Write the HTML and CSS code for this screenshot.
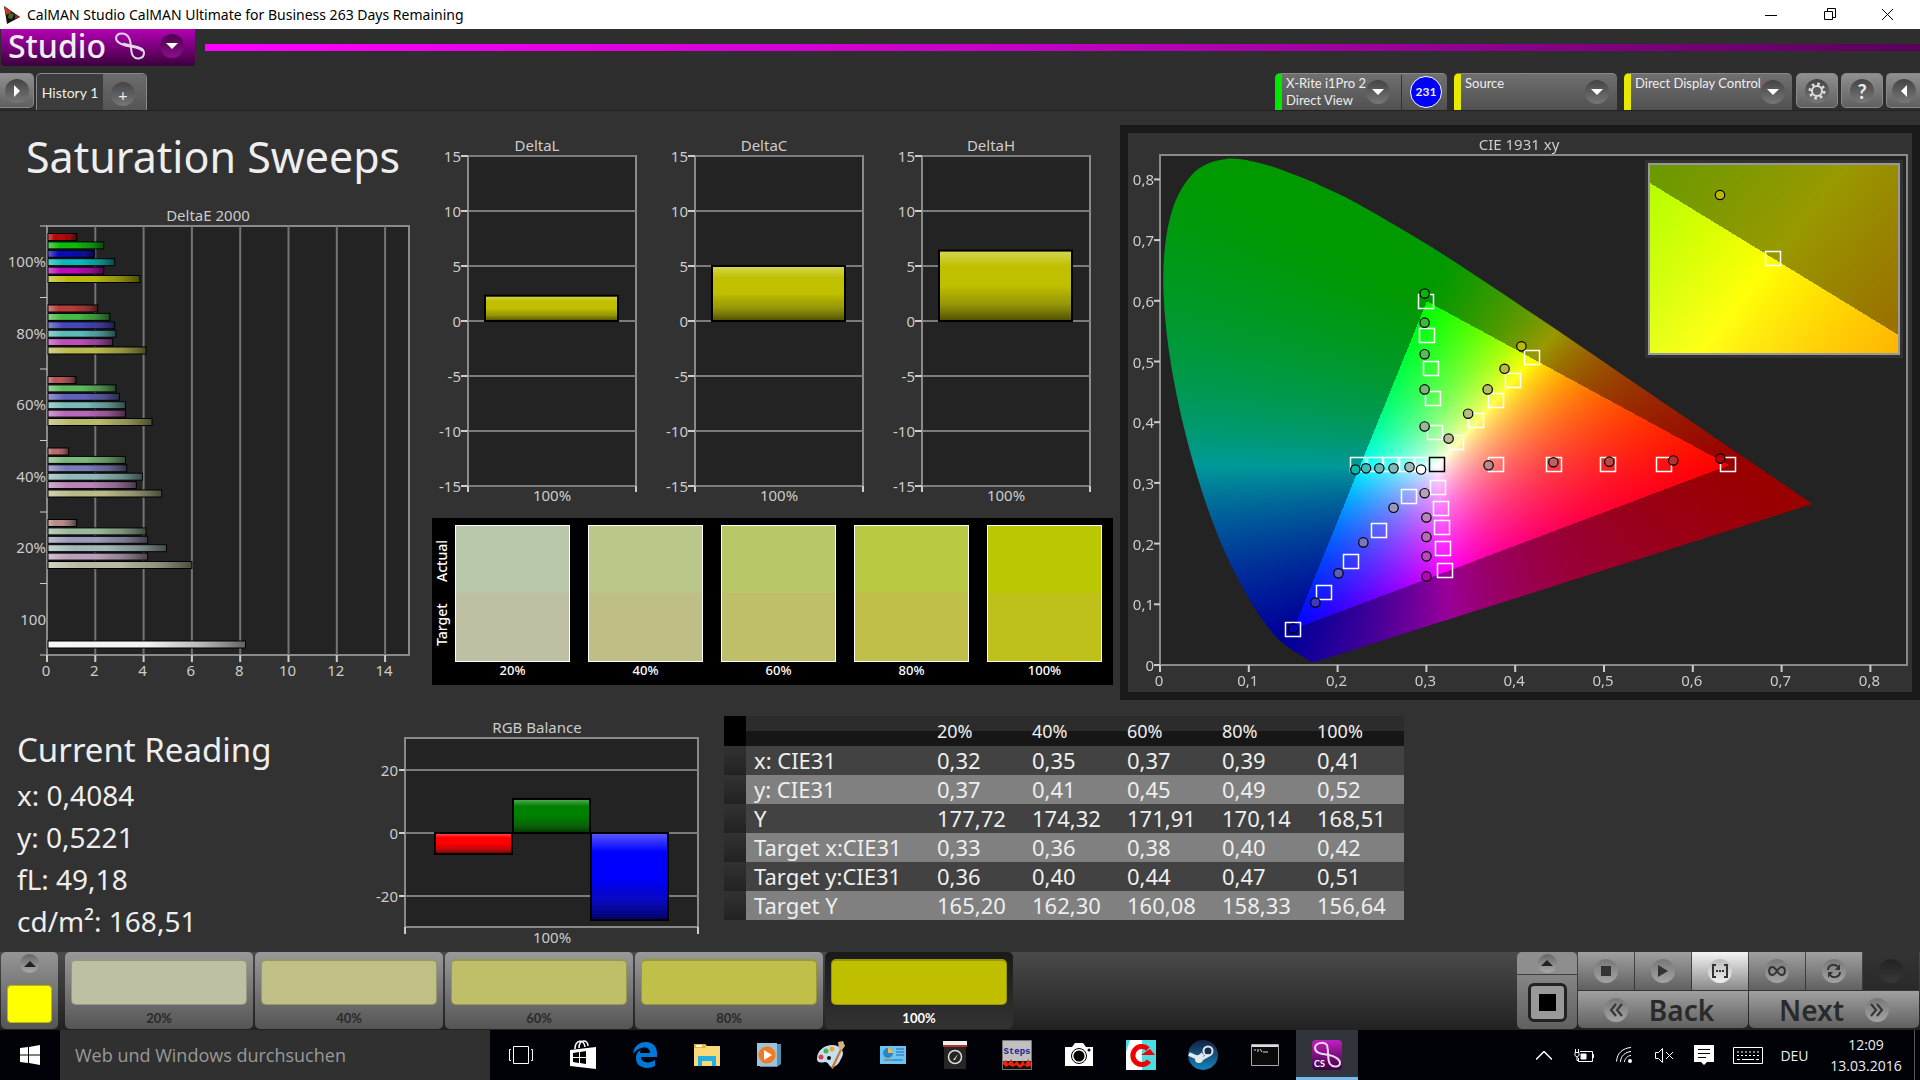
FILE: index.html
```html
<!DOCTYPE html>
<html lang="en">
<head>
    <meta charset="UTF-8">
    <meta name="viewport" content="width=device-width, initial-scale=1.0">
    <title>CalMAN Studio</title>
    <link rel="stylesheet" href="styles.css">
</head>
<body>
    <header class="titlebar">
        <svg class="app-icon" width="18" height="20" viewBox="0 0 18 20"><path d="M1 1 17 12 4 19z" fill="#1c1010"/><path d="M1 1 9 7 3 10z" fill="#c33a1c"/><path d="M6 8l5 1-2 5-4-1z" fill="#3f6b2a"/><path d="M12 9l5 3-5 2z" fill="#a02418"/></svg>
        <span class="titlebar-text">CalMAN Studio CalMAN Ultimate for Business 263 Days Remaining</span>
        <button class="win-btn" aria-label="Minimize"><svg width="12" height="12" viewBox="0 0 12 12"><path d="M0 6.500H12" stroke="#000"/></svg></button>
        <button class="win-btn" aria-label="Restore"><svg width="13" height="13" viewBox="0 0 13 13" fill="none" stroke="#000"><path d="M1.500 3.500h8v8h-8zM4.500 3V.5h8v9H10"/></svg></button>
        <button class="win-btn" aria-label="Close"><svg width="13" height="13" viewBox="0 0 13 13"><path d="M1 1l11 11M12 1L1 12" stroke="#000"/></svg></button>
    </header>

    <div class="brandbar">
        <button class="brand">
            <span>Studio</span>
            <svg width="34" height="30" viewBox="0 0 34 30" fill="none" stroke="#e4d4e8" stroke-width="2"><path d="M16 7C13 1 4 1 3 7c0 5 7 7 13 8s15 1 15 7c0 6-8 7-11 3-3-4-1-13-4-18z"/><path d="M10 13c7 3 17 2 20 7" stroke-width="3"/></svg>
            <span class="round brand-drop"><svg width="14" height="8" viewBox="0 0 14 8"><path d="M1 1h12L7 7z" fill="#fff"/></svg></span>
        </button>
        <div class="brand-line"></div>
    </div>

    <nav class="tabrow">
        <button class="side-btn side-left" aria-label="Expand"><span class="round"><svg width="8" height="14" viewBox="0 0 8 14"><path d="M1 1v12l6-6z" fill="#fff"/></svg></span></button>
        <div class="tabs">
            <button class="tab">History 1</button>
            <button class="tab-add" aria-label="Add tab"><span class="round">+</span></button>
        </div>
        <div class="device device-meter">
            <span class="device-name">X-Rite i1Pro 2<br>Direct View</span>
            <button class="round" aria-label="Meter options"><svg width="12" height="8" viewBox="0 0 12 8"><path d="M0 1h12L6 7z" fill="#fff"/></svg></button>
            <span class="badge-cell"><span class="badge">231</span></span>
        </div>
        <div class="device device-source">
            <span class="device-name">Source</span>
            <button class="round" aria-label="Source options"><svg width="12" height="8" viewBox="0 0 12 8"><path d="M0 1h12L6 7z" fill="#fff"/></svg></button>
        </div>
        <div class="device device-display">
            <span class="device-name">Direct Display Control</span>
            <button class="round" aria-label="Display options"><svg width="12" height="8" viewBox="0 0 12 8"><path d="M0 1h12L6 7z" fill="#fff"/></svg></button>
        </div>
        <button class="side-btn" aria-label="Settings"><span class="round"><svg width="18" height="18" viewBox="0 0 18 18" fill="none" stroke="#ddd"><circle cx="9" cy="9" r="5" stroke-width="2"/><circle cx="9" cy="9" r="7" stroke-width="3" stroke-dasharray="2.500 3"/></svg></span></button>
        <button class="side-btn" aria-label="Help"><span class="round help">?</span></button>
        <button class="side-btn side-right" aria-label="Collapse"><span class="round"><svg width="8" height="14" viewBox="0 0 8 14"><path d="M7 1v12L1 7z" fill="#fff"/></svg></span></button>
    </nav>

    <main>
        <section class="charts">
            <div class="col-sweeps">
                <h1>Saturation Sweeps</h1>
                <svg id="deltaE" class="chart" viewBox="0 0 432 490"></svg>
            </div>
            <div class="col-deltas">
                <div class="deltas">
                    <svg id="deltaL" class="chart" viewBox="0 0 227 380"></svg>
                    <svg id="deltaC" class="chart" viewBox="0 0 227 380"></svg>
                    <svg id="deltaH" class="chart" viewBox="0 0 227 380"></svg>
                </div>
                <div class="swatches">
                    <div class="swatch-side"><span>Actual</span><span>Target</span></div>
                    <div class="swatch-grid">
                        <div class="swatch"><div class="pair pair-20"></div>20%</div>
                        <div class="swatch"><div class="pair pair-40"></div>40%</div>
                        <div class="swatch"><div class="pair pair-60"></div>60%</div>
                        <div class="swatch"><div class="pair pair-80"></div>80%</div>
                        <div class="swatch"><div class="pair pair-100"></div>100%</div>
                    </div>
                </div>
            </div>
            <div class="cie">
                <canvas id="cieFill" width="784" height="559"></canvas>
                <svg id="cie" class="chart" viewBox="0 0 784 559"></svg>
            </div>
        </section>

        <section class="readings">
            <div class="reading">
                <h2>Current Reading</h2>
                <p>x: 0,4084</p>
                <p>y: 0,5221</p>
                <p>fL: 49,18</p>
                <p>cd/m²: 168,51</p>
            </div>
            <svg id="rgb" class="chart" viewBox="0 0 350 240"></svg>
            <div class="table-wrap">
                <table>
                    <thead>
                        <tr><td class="mark"></td><th class="name"></th><th>20%</th><th>40%</th><th>60%</th><th>80%</th><th>100%</th></tr>
                    </thead>
                    <tbody>
                        <tr><td class="mark"></td><th class="name">x: CIE31</th><td>0,32</td><td>0,35</td><td>0,37</td><td>0,39</td><td>0,41</td></tr>
                        <tr><td class="mark"></td><th class="name">y: CIE31</th><td>0,37</td><td>0,41</td><td>0,45</td><td>0,49</td><td>0,52</td></tr>
                        <tr><td class="mark"></td><th class="name">Y</th><td>177,72</td><td>174,32</td><td>171,91</td><td>170,14</td><td>168,51</td></tr>
                        <tr><td class="mark"></td><th class="name">Target x:CIE31</th><td>0,33</td><td>0,36</td><td>0,38</td><td>0,40</td><td>0,42</td></tr>
                        <tr><td class="mark"></td><th class="name">Target y:CIE31</th><td>0,36</td><td>0,40</td><td>0,44</td><td>0,47</td><td>0,51</td></tr>
                        <tr><td class="mark"></td><th class="name">Target Y</th><td>165,20</td><td>162,30</td><td>160,08</td><td>158,33</td><td>156,64</td></tr>
                    </tbody>
                </table>
            </div>
        </section>
    </main>

    <footer class="toolbar">
        <button class="current" aria-label="Current pattern">
            <span class="round small"><svg width="12" height="8" viewBox="0 0 12 8"><path d="M0 7h12L6 1z" fill="#222"/></svg></span>
            <span class="current-color"></span>
        </button>
        <button class="level"><span class="chip chip-20"></span>20%</button>
        <button class="level"><span class="chip chip-40"></span>40%</button>
        <button class="level"><span class="chip chip-60"></span>60%</button>
        <button class="level"><span class="chip chip-80"></span>80%</button>
        <button class="level selected"><span class="chip chip-100"></span>100%</button>

        <div class="pattern">
            <button class="pattern-up" aria-label="Pattern menu"><span class="round small"><svg width="12" height="8" viewBox="0 0 12 8"><path d="M0 7h12L6 1z" fill="#222"/></svg></span></button>
            <button class="pattern-window" aria-label="Window pattern"><span class="pattern-frame"><span class="pattern-dot"></span></span></button>
        </div>
        <div class="transport">
            <button class="key" aria-label="Stop"><span class="round"><svg width="12" height="12"><path d="M1 1h10v10H1z" fill="#333"/></svg></span></button>
            <button class="key" aria-label="Play"><span class="round"><svg width="12" height="14"><path d="M1 1v12l10-6z" fill="#333"/></svg></span></button>
            <button class="key active" aria-label="Read series"><span class="round"><svg width="18" height="16" viewBox="0 0 18 16" fill="none" stroke="#333" stroke-width="2"><path d="M5 2H2v12h3M13 2h3v12h-3M5 8h2M8 8h2M11 8h2"/></svg></span></button>
            <button class="key" aria-label="Continuous"><span class="round"><svg width="18" height="10" viewBox="0 0 18 10" fill="none" stroke="#333" stroke-width="2"><path d="M9 5C7 2 6 1 4.500 1 0 1 0 9 4.500 9 6 9 7 8 9 5s3-4 4.500-4c4.500 0 4.500 8 0 8C12 9 11 8 9 5z"/></svg></span></button>
            <button class="key" aria-label="Refresh"><span class="round"><svg width="16" height="16" viewBox="0 0 16 16" fill="none" stroke="#333" stroke-width="2"><path d="M2 7c0-5 7-7 10-3M14 9c0 5-7 7-10 3"/><path d="M14 1v6H9zM2 15V9h5z" fill="#333" stroke="none"/></svg></span></button>
            <button class="key off" aria-label="Unused" disabled><span class="round"></span></button>
            <button class="step back"><span class="round"><svg width="14" height="14" viewBox="0 0 14 14" fill="none" stroke="#333" stroke-width="2"><path d="M7 1L2 7l5 6M13 1L8 7l5 6"/></svg></span>Back</button>
            <button class="step next">Next<span class="round"><svg width="14" height="14" viewBox="0 0 14 14" fill="none" stroke="#333" stroke-width="2"><path d="M1 1l5 6-5 6M7 1l5 6-5 6"/></svg></span></button>
        </div>
    </footer>

    <div class="taskbar">
        <button class="start" aria-label="Start"><svg width="20" height="20" viewBox="0 0 20 20" fill="#fff"><path d="M0 3l8-1v7.500H0zM9 2l11-2v9.500H9zM0 10.500h8V18l-8-1zM9 10.500h11V20L9 18z"/></svg></button>
        <input class="search" type="text" placeholder="Web und Windows durchsuchen" aria-label="Web und Windows durchsuchen">
        <button class="app" aria-label="Task view"><svg width="26" height="20" viewBox="0 0 26 20" fill="none" stroke="#fff"><path d="M5.500 1.500h15v17h-15zM3 4.500H1.500v11H3M23 4.500h1.500v11H23"/></svg></button>
        <button class="app" aria-label="Store"><svg width="28" height="30" viewBox="0 0 28 30"><path d="M1 10l26-3v22L1 26z" fill="#fff"/><path d="M6 9c0-9 9-11 10-2M10 8c0-9 9-9 9-2" fill="none" stroke="#fff" stroke-width="1.500"/><path d="M4 13l6-1v5H4zM11 12l6-1v6h-6zM4 18h6v5l-6-1zM11 18h6v6l-6-1z" fill="#000"/></svg></button>
        <button class="app" aria-label="Edge"><svg width="26" height="28" viewBox="0 0 26 28"><path d="M1 13C2 4 8 1 14 1c7 0 11 5 11 11v4H9c0 6 9 7 14 3v6c-8 4-19 2-19-8 0-4 2-7 5-8-1 1-1 2-1 3h10c0-8-11-7-17 1z" fill="#0078d7"/></svg></button>
        <button class="app" aria-label="Explorer"><svg width="28" height="24" viewBox="0 0 28 24"><path d="M1 1h11l2 2h13v20H1z" fill="#f9d978"/><path d="M1 1h11l1 4H1z" fill="#e8b43c"/><path d="M3 2h6v2H3z" fill="#fff"/><path d="M5 23V13h18v10h-4v-5H9v5z" fill="#22b0e6"/></svg></button>
        <button class="app" aria-label="Media player"><svg width="26" height="26" viewBox="0 0 26 26"><path d="M4 2h21v20l-4 3H4z" fill="#5590b4"/><path d="M1 1h20v23H1z" fill="#9cc4da"/><circle cx="11" cy="13" r="8.500" fill="#f27a20"/><path d="M8 8v10l8-5z" fill="#fff"/></svg></button>
        <button class="app" aria-label="Paint"><svg width="30" height="30" viewBox="0 0 30 30"><path d="M1 19C1 10 9 5 16 5c9 0 13 7 10 12-2 4-4 9-9 10-4 1-4-5-8-5-4 1-8 1-8-3z" fill="#c4dff0"/><circle cx="5" cy="17" r="2.500" fill="#e04040"/><circle cx="10" cy="11" r="2.500" fill="#4caf50"/><circle cx="16" cy="9" r="2.500" fill="#f5a623"/><circle cx="13" cy="18" r="2" fill="#111"/><path d="M15 28l9-19 2 1-9 19z" fill="#c87830"/><path d="M22 2l5-1 2 5-3 4-3-1z" fill="#d8b080"/></svg></button>
        <button class="app" aria-label="System info"><svg width="28" height="20" viewBox="0 0 28 20"><path d="M1 1h26v18H1z" fill="#6cc4f4"/><circle cx="9" cy="8" r="5" fill="#2a86cc"/><path d="M9 8V3a5 5 0 0 1 5 5z" fill="#f5b942"/><path d="M17 4h8M17 7h8M17 10h8M5 15h19" stroke="#1d6fae"/><path d="M5 15h8" stroke="#e08030"/></svg></button>
        <button class="app" aria-label="Drive gauge"><svg width="24" height="30" viewBox="0 0 24 30"><path d="M1 1h22v28H1z" fill="#262424"/><path d="M0 1h24v4H0z" fill="#eee"/><path d="M0 5h24v2H0z" fill="#b03030"/><circle cx="12" cy="17" r="6.500" fill="none" stroke="#ddd" stroke-width="1.500"/><path d="M10 20l5-6-3 6z" fill="#ddd"/></svg></button>
        <button class="app" aria-label="Steps"><svg width="30" height="30" viewBox="0 0 30 30"><path d="M.5.5h29v29H.5z" fill="#c0c0c0" stroke="#777"/><path d="M1 21h28v8H1z" fill="#111"/><path d="M1 22l3-2 2 4 3-5 3 5 3-3 3 4 3-5 2 5 3-6 3 4v3l-4 1-3-2-4 3-4-3-3 2-4-2-3 2-3-3z" fill="#f02010"/><text x="15" y="14" text-anchor="middle" class="steps-text">Steps</text></svg></button>
        <button class="app" aria-label="Camera"><svg width="30" height="24" viewBox="0 0 30 24"><path d="M1 4h7l3-4h8l3 4h7v19H1z" fill="#fff"/><circle cx="15" cy="13" r="7.500" fill="#fff" stroke="#000"/><circle cx="15" cy="13" r="5.500" fill="#000"/><circle cx="25" cy="7" r="1.500" fill="#000"/></svg></button>
        <button class="app" aria-label="Calibration"><svg width="30" height="30" viewBox="0 0 30 30"><path d="M0 0h30v30H0z" fill="#4ddde0"/><path d="M4 0h12v30H0V12z" fill="#fff"/><path d="M22 9a9 9 0 1 0 1 12" fill="none" stroke="#f00000" stroke-width="5"/><path d="M15 15h14l-5-6z" fill="#f00000"/></svg></button>
        <button class="app" aria-label="Steam"><svg width="30" height="30" viewBox="0 0 30 30"><defs><linearGradient id="steamBg" x2="0" y2="1"><stop stop-color="#152240"/><stop offset="1" stop-color="#1583bd"/></linearGradient></defs><circle cx="15" cy="15" r="15" fill="url(#steamBg)"/><path d="M1 14l9 4 5-4" stroke="#e4e8ec" stroke-width="4" fill="none"/><circle cx="20" cy="11" r="4.500" fill="#152a50" stroke="#e4e8ec" stroke-width="2"/><circle cx="11" cy="19" r="4" fill="#e4e8ec"/><path d="M14 19l7-4" stroke="#e4e8ec" stroke-width="3"/></svg></button>
        <button class="app" aria-label="Command prompt"><svg width="28" height="22" viewBox="0 0 28 22"><path d="M.5.500h27v21H.5z" fill="#0a0a0a" stroke="#aaa"/><path d="M1 1h26v2H1z" fill="#ddd"/><path d="M3 6h2M7 5v3M9 5l2 3M12 8h5" stroke="#ddd"/></svg></button>
        <button class="app running" aria-label="CalMAN Studio"><svg width="30" height="30" viewBox="0 0 30 30"><defs><linearGradient id="csBg" x2="0" y2="1"><stop stop-color="#c020c0"/><stop offset="1" stop-color="#3a0040"/></linearGradient></defs><rect width="30" height="30" rx="4" fill="url(#csBg)"/><path d="M15 5C12 1 3 3 3 8c0 6 9 6 14 7s11 4 11 8-7 5-10 1-1-12-3-19z" fill="none" stroke="#f0d8f0" stroke-width="2"/><text x="2" y="27" class="cs-text">CS</text></svg></button>

        <div class="tray">
            <button class="tray-btn" aria-label="Show hidden icons"><svg width="16" height="9" viewBox="0 0 16 9" fill="none" stroke="#fff" stroke-width="1.500"><path d="M0 8.500l8-8 8 8"/></svg></button>
            <button class="tray-btn" aria-label="Battery"><svg width="20" height="13" viewBox="0 0 20 13" fill="none" stroke="#fff"><path d="M6 2.500h12.500v10h-14V9M19.500 5v4M1 3.500h4v3L3 8 1 6.500zM1.500 0v3M4.500 0v3M3 8v3.500h2"/><path d="M7 5h5v5H7z" fill="#fff"/></svg></button>
            <button class="tray-btn" aria-label="Network"><svg width="16" height="16" viewBox="0 0 16 16" fill="none" stroke="#fff"><path d="M.5 14.500C1 6 7 1 15 .5M4.500 15c0-6 5-10 10.500-10.500M8.500 15c0-3 3-6.500 6.500-6.500"/><circle cx="14" cy="14" r="2" fill="#fff" stroke="none"/></svg></button>
            <button class="tray-btn" aria-label="Volume muted"><svg width="19" height="15" viewBox="0 0 19 15" fill="none" stroke="#fff"><path d="M.5 4.500h3l4-4v14l-4-4h-3zM11 4l7 7M18 4l-7 7"/></svg></button>
            <button class="tray-btn" aria-label="Notifications"><svg width="20" height="20" viewBox="0 0 20 20"><path d="M0 0h20v17h-7l-3 3-3-3H0z" fill="#fff"/><path d="M4 4.500h12M4 8.500h12M4 12.500h8" stroke="#000"/></svg></button>
            <button class="tray-btn tray-wide" aria-label="Keyboard"><svg width="30" height="17" viewBox="0 0 30 17" fill="none" stroke="#fff"><path d="M.5.500h29v16H.5z"/><path d="M4 5h23M4 8.500h23" stroke-dasharray="2 2"/><path d="M4 12.500h3M9 12.500h12M23 12.500h3"/></svg></button>
            <button class="tray-btn tray-wide">DEU</button>
            <button class="clock">12:09<br>13.03.2016</button>
        </div>
    </div>

    <script src="script.js"></script>
</body>
</html>
```

FILE: styles.css
```css
* {
    box-sizing: border-box;
}
body {
    margin: 0;
    min-height: 100vh;
    display: flex;
    flex-direction: column;
    background: #2e2e2e;
    color: #eee;
    font-family: 'Noto Sans', 'Open Sans', sans-serif;
    font-size: 14px;
}
button {
    font-family: inherit;
    font-size: inherit;
    color: inherit;
    background: none;
    border: none;
    padding: 0;
    cursor: pointer;
}
svg {
    display: block;
    flex-shrink: 0;
}
h1, h2, p {
    margin: 0;
    font-weight: normal;
}

/* window title */
.titlebar {
    display: flex;
    align-items: center;
    height: 29px;
    padding: 0 4px 0 3px;
    background: #fff;
    color: #000;
}
.titlebar-text {
    flex: 1;
    margin-left: 6px;
}
.win-btn {
    width: 58px;
    height: 29px;
    display: flex;
    align-items: center;
    justify-content: center;
}

/* round icon backdrop */
.round {
    width: 24px;
    height: 24px;
    border-radius: 50%;
    display: flex;
    align-items: center;
    justify-content: center;
    flex-shrink: 0;
    background: linear-gradient(#444, #777);
}
.small {
    width: 19px;
    height: 19px;
    background: linear-gradient(#666, #aaa);
}

.brandbar {
    display: flex;
    height: 44px;
    padding-left: 1px;
}
.brand {
    display: flex;
    align-items: center;
    gap: 7px;
    width: 194px;
    height: 37px;
    padding: 0 0 4px 7px;
    border-radius: 0 0 4px 4px;
    background: linear-gradient(#b400b4, #3a003c);
    font-size: 32px;
    font-weight: 500;
    line-height: 32px;
}
.brand-drop {
    margin-left: 6px;
    background: linear-gradient(#4a004c, #8a108a);
}
.brand-line {
    flex: 1;
    height: 7px;
    margin: 15px 0 0 10px;
    background: linear-gradient(90deg, #f0f, #c000c0 50%, #5a005a);
}

/* tabs and devices */
.tabrow {
    display: flex;
    align-items: flex-start;
    height: 37px;
    font-family: Lato, sans-serif;
    font-size: 14px;
}
.side-btn {
    width: 42px;
    height: 35px;
    margin-left: 3px;
    display: flex;
    align-items: center;
    justify-content: center;
    border: 1px solid #888;
    border-radius: 5px;
    background: linear-gradient(#909090, #606060);
}
.side-left {
    width: 34px;
    margin-left: 0;
    border-radius: 0 5px 5px 0;
    border-left: none;
}
.side-right {
    width: 34px;
    border-radius: 5px 0 0 5px;
    border-right: none;
}
.help {
    font-size: 20px;
    font-weight: bold;
}
.tabs {
    display: flex;
    width: 111px;
    height: 37px;
    margin: 0 auto 0 2px;
    border: 1px solid #888;
    border-bottom: none;
    border-radius: 5px 5px 0 0;
    background: #3c3c3c;
    overflow: hidden;
}
.tab {
    flex: 1;
    font-size: 14px;
}
.tab-add {
    width: 43px;
    padding: 4px 0 0 8px;
    background: linear-gradient(#6c6c6c, #555);
    font-size: 16px;
}
.device {
    display: flex;
    width: 163px;
    height: 37px;
    margin-right: 7px;
    padding: 1px 8px 0 4px;
    border-left: 7px solid #e8e800;
    border-top: 1px solid #888;
    border-radius: 5px 5px 0 0;
    background: linear-gradient(#707070, #505050);
    font-size: 13px;
    line-height: 17px;
}
.device-name {
    flex: 1;
    white-space: nowrap;
}
.device .round {
    margin-top: 5px;
}
.device-meter {
    width: 172px;
    padding-right: 3px;
    border-left-color: #00e800;
}
.device-display {
    width: 168px;
    margin-right: 1px;
}
.badge-cell {
    width: 43px;
    margin-left: 11px;
    padding: 1px 0 0 8px;
    border-left: 1px solid #333;
}
.badge {
    display: block;
    width: 32px;
    height: 32px;
    border: 1px solid #fff;
    border-radius: 50%;
    background: #00f;
    font-size: 12px;
    font-weight: bold;
    line-height: 30px;
    text-align: center;
}

/* main area */
main {
    flex: 1;
    border-top: 1px solid #222;
    background: #323232;
}
.charts {
    display: grid;
    grid-template-columns: 432fr 681fr 807fr;
}
.chart {
    width: 100%;
    height: auto;
    font-size: 15px;
    fill: #ccc;
}
.col-sweeps h1 {
    padding: 16px 0 0 26px;
    height: 89px;
    font-size: 43px;
    line-height: 60px;
    white-space: nowrap;
}
.col-deltas {
    padding-top: 19px;
}
.deltas {
    display: grid;
    grid-template-columns: repeat(3, 1fr);
}
.swatches {
    display: flex;
    margin-top: 8px;
    padding: 7px 11px 7px 0;
    background: #000;
    color: #fff;
    font-weight: 500;
}
.swatch-side {
    display: flex;
    flex-direction: row-reverse;
    justify-content: space-around;
    width: 23px;
    height: 136px;
    padding: 4px 0;
    writing-mode: vertical-rl;
    transform: rotate(180deg);
    line-height: 20px;
}
.swatch-grid {
    flex: 1;
    display: grid;
    grid-template-columns: repeat(5, 1fr);
    gap: 18px;
}
.swatch {
    font-size: 13px;
    line-height: 16px;
    text-align: center;
}
.pair {
    height: 137px;
    border: 1px solid #fff;
}
.pair-20 { background: linear-gradient(#b9c8aa 50%, #bfbfa3 50%); }
.pair-40 { background: linear-gradient(#b9c888 50%, #bfbf85 50%); }
.pair-60 { background: linear-gradient(#b9c866 50%, #bfbf69 50%); }
.pair-80 { background: linear-gradient(#b9c842 50%, #bfbf49 50%); }
.pair-100 { background: linear-gradient(#b9c800 50%, #c0c01a 50%); }

.cie {
    display: grid;
    align-self: start;
    margin: 14px 0 0 7px;
    border: 8px solid #1a1a1a;
}
.cie canvas, .cie svg {
    grid-area: 1 / 1;
    width: 100%;
    height: auto;
}

.readings {
    display: grid;
    grid-template-columns: 370fr 350fr 1200fr;
    align-items: start;
    padding-top: 12px;
}
.reading {
    padding: 16px 0 0 17px;
    font-size: 28px;
    line-height: 42px;
}
.reading h2 {
    font-size: 33px;
    line-height: 44px;
    padding-bottom: 2px;
}
.table-wrap {
    padding: 4px 0 0 4px;
}
table {
    border-collapse: collapse;
    font-size: 22px;
    line-height: 29px;
}
th, td {
    width: 95px;
    height: 29px;
    padding: 0 0 0 8px;
    font-weight: normal;
    text-align: left;
}
thead th {
    height: 30px;
    font-size: 18px;
    background: linear-gradient(#2c2c2c 50%, #161616 50%);
}
.name {
    width: 183px;
}
.mark {
    width: 22px;
    padding: 0;
    background: linear-gradient(#323232, #222);
}
thead .mark {
    background: #000;
}
tbody tr {
    background: #424242;
}
tbody tr:nth-child(even) {
    background: #808080;
}

/* bottom toolbar */
.toolbar {
    display: flex;
    gap: 2px;
    height: 78px;
    padding: 0 1px 1px;
    background: linear-gradient(#4a4a4a, #222);
    font-family: Lato, sans-serif;
    font-size: 13px;
    color: #2a2a2a;
}
.current {
    width: 57px;
    margin-right: 5px;
    padding: 2px 7px 6px;
    border-radius: 5px;
    background: linear-gradient(#959595, #555);
    display: flex;
    flex-direction: column;
    align-items: center;
    justify-content: space-between;
}
.current-color {
    width: 45px;
    height: 38px;
    border: 1px solid #b8b800;
    border-radius: 4px;
    background: #ff0;
}
.level {
    width: 188px;
    padding: 7px 6px 5px;
    border-radius: 5px;
    background: linear-gradient(#999, #555);
    font-weight: bold;
    line-height: 26px;
}
.selected {
    background: linear-gradient(#1a1a1a, #333);
    color: #fff;
}
.chip {
    display: block;
    height: 46px;
    border: 1px solid rgba(0, 0, 0, 0.2);
    border-top-width: 2px;
    border-radius: 5px;
}
.chip-20 { background-color: #bfbfa3; }
.chip-40 { background-color: #bfbf86; }
.chip-60 { background-color: #bfbf6a; }
.chip-80 { background-color: #bfbf4a; }
.chip-100 { background-color: #bfbf00; }
.pattern {
    width: 60px;
    margin-left: auto;
    margin-right: -1px;
    border-radius: 5px;
    overflow: hidden;
    display: flex;
    flex-direction: column;
    gap: 1px;
}
.pattern-up, .pattern-window {
    display: flex;
    align-items: center;
    justify-content: center;
}
.pattern-up {
    height: 22px;
    background: #8e8e8e;
}
.pattern-window {
    flex: 1;
    background: linear-gradient(#858585, #606060);
}
.pattern-frame {
    width: 39px;
    height: 39px;
    padding: 8px;
    border: 3px solid #222;
    border-radius: 6px;
    background: #999;
}
.pattern-dot {
    display: block;
    height: 17px;
    background: #000;
}
.transport {
    display: grid;
    grid-template-columns: repeat(6, 56px);
    grid-template-rows: 38px 37px;
    gap: 1px;
}
.key, .step {
    display: flex;
    align-items: center;
    justify-content: center;
    background: linear-gradient(#a0a0a0, #606060);
}
.transport .round {
    background: linear-gradient(#777, #a4a4a4);
}
.key.active {
    background: linear-gradient(#f4f4f4, #888);
}
.key.active .round {
    background: linear-gradient(#bbb, #eee);
}
.key.off {
    background: linear-gradient(#333, #2a2a2a);
}
.key.off .round {
    background: linear-gradient(#222, #383838);
}
.step {
    grid-column: span 3;
    gap: 21px;
    border-radius: 0 0 5px 5px;
    font-family: 'Noto Sans', sans-serif;
    font-size: 28px;
    font-weight: 600;
    line-height: 36px;
}
.step.back {
    padding-right: 8px;
}

/* taskbar */
.taskbar {
    display: flex;
    height: 50px;
    background: #000208;
    font-family: 'Open Sans', sans-serif;
}
.start {
    width: 60px;
    display: flex;
    align-items: center;
    justify-content: center;
}
.search {
    width: 430px;
    padding: 0 0 0 15px;
    border: none;
    background: #303030;
    color: #fff;
    font-family: inherit;
    font-size: 18px;
}
.search::placeholder {
    color: #999;
}
.app {
    width: 62px;
    display: flex;
    align-items: center;
    justify-content: center;
}
.running {
    border-bottom: 3px solid #76b9ed;
    padding-top: 3px;
    background: #31353b;
}
.steps-text {
    font: bold 9px 'Liberation Mono', monospace;
    fill: #1a1a90;
}
.cs-text {
    font: bold 9px Lato, sans-serif;
    fill: #fff;
}
.tray {
    display: flex;
    margin-left: auto;
    margin-right: 5px;
    border-right: 1px solid #555;
}
.tray-btn {
    width: 40px;
    display: flex;
    align-items: center;
    justify-content: center;
}
.tray-wide {
    width: 47px;
}
.clock {
    width: 96px;
    line-height: 21px;
}
```

FILE: script.js
```js
const SVG_NS = 'http://www.w3.org/2000/svg';

function add(parent, tag, attrs, text) {
    const el = document.createElementNS(SVG_NS, tag);
    for (const key in attrs) el.setAttribute(key, attrs[key]);
    if (text !== undefined) el.textContent = text;
    parent.appendChild(el);
    return el;
}

function line(svg, x1, y1, x2, y2, color, width) {
    add(svg, 'path', { d: `M${x1} ${y1}L${x2} ${y2}`, stroke: color, 'stroke-width': width || 2 });
}

function label(svg, x, y, text, anchor) {
    add(svg, 'text', { x: x, y: y, 'text-anchor': anchor || 'middle' }, text);
}

function plotArea(svg, x, y, w, h) {
    add(svg, 'rect', { x: x, y: y, width: w, height: h, fill: '#232323', stroke: '#8a8a8a', 'stroke-width': 2 });
}

// highlight on the leading edge, shadow on the trailing one
function shade(svg, id, vertical) {
    const g = add(svg, 'linearGradient', { id: id, x1: 0, y1: 0, x2: vertical ? 0 : 1, y2: vertical ? 1 : 0 });
    [[0, '#fff', 0.35], [0.22, '#fff', 0], [0.5, '#000', 0], [0.75, '#222', 0.25], [1, '#000', 0.6]].forEach(s =>
        add(g, 'stop', { offset: s[0], 'stop-color': s[1], 'stop-opacity': s[2] }));
}

function bar(svg, x, y, w, h, color, shadeId) {
    add(svg, 'rect', { x: x, y: y, width: w, height: h, fill: color });
    add(svg, 'rect', { x: x, y: y, width: w, height: h, fill: `url(#${shadeId})`, stroke: '#000', 'stroke-width': h < 12 ? 1 : 2 });
}

function drawDeltaE() {
    const svg = document.getElementById('deltaE');
    const left = 47, top = 26, width = 362, height = 429, unit = 24.15, group = height / 6;
    const groups = [
        ['100%', [1.23, 2.35, 1.98, 2.8, 2.35, 3.84], ['#b90808', '#0cb90c', '#0a0ab9', '#0cb9b9', '#b90cb9', '#b9b90c']],
        ['80%', [2.1, 2.6, 2.8, 2.85, 2.72, 4.1], ['#b93c3c', '#46b946', '#4646b9', '#5ab9b9', '#b94fb9', '#b9b94f']],
        ['60%', [1.2, 2.85, 3, 3.25, 3.25, 4.35], ['#b95454', '#60b960', '#6262b9', '#78b9b9', '#b968b9', '#b9b96b']],
        ['40%', [0.9, 3.25, 3.3, 3.95, 3.7, 4.75], ['#b96b6b', '#7ab97a', '#7c7cb9', '#8fb9b9', '#b984b9', '#b9b98a']],
        ['20%', [1.23, 4.1, 4.17, 4.95, 4.17, 6], ['#b98c8c', '#9ab99a', '#9a9ab9', '#a3b9b9', '#b99fb9', '#b9b9a0']]
    ];
    shade(svg, 'shadeE', false);
    label(svg, 208, 21, 'DeltaE 2000');
    plotArea(svg, left, top, width, height);
    for (let v = 0; v <= 14; v += 2) {
        const x = left + v * unit;
        if (v > 0) line(svg, x, top, x, top + height, '#747474');
        line(svg, x, top + height, x, top + height + 7, '#ccc');
        label(svg, x - 1, 476, v);
    }
    for (let i = 0; i <= 6; i++) {
        line(svg, left - 7, top + i * group, left, top + i * group, '#ccc', 1);
    }
    groups.forEach((g, i) => {
        label(svg, left - 1, top + i * group + 41, g[0], 'end');
        g[1].forEach((v, n) => bar(svg, left + 1, top + 7.5 + i * group + n * 8.4, v * unit - 1, 7, g[2][n], 'shadeE'));
    });
    label(svg, left - 1, top + 5 * group + 41, '100', 'end');
    bar(svg, left + 1, 441, 8.22 * unit - 1, 7, '#f4f4f4', 'shadeE');
}

function drawDelta(id, title, value) {
    const svg = document.getElementById(id);
    const left = 36, top = 26, width = 168, unit = 11, zero = top + 15 * unit;
    shade(svg, 'shade' + id, true);
    label(svg, 105, 21, title);
    plotArea(svg, left, top, width, 30 * unit);
    for (let v = 15; v >= -15; v -= 5) {
        const y = zero - v * unit;
        line(svg, left, y, left + width, y, '#7c7c7c');
        line(svg, left - 7, y, left, y, '#ccc');
        label(svg, left - 7, y + 6, v, 'end');
    }
    line(svg, left, 356, left, 362, '#ccc');
    line(svg, left + width, 356, left + width, 362, '#ccc');
    label(svg, 120, 371, '100%');
    bar(svg, left + 17, zero - value * unit, 133, value * unit, '#c0c000', 'shade' + id);
}

function drawRgb() {
    const svg = document.getElementById('rgb');
    const left = 35, top = 26, width = 293, height = 189, zero = 121;
    shade(svg, 'shadeRgb', true);
    label(svg, 167, 21, 'RGB Balance');
    plotArea(svg, left, top, width, height);
    [20, 0, -20].forEach(v => {
        const y = zero - v * 3.15;
        line(svg, left, y, left + width, y, '#7c7c7c');
        line(svg, left - 6, y, left, y, '#ccc');
        label(svg, left - 7, y + 6, v, 'end');
    });
    line(svg, left, 215, left, 222, '#ccc');
    line(svg, left + width, 215, left + width, 222, '#ccc');
    label(svg, 182, 231, '100%');
    bar(svg, 65, zero, 77, 21, '#ff0000', 'shadeRgb');
    bar(svg, 143, 87, 77, 34, '#008000', 'shadeRgb');
    bar(svg, 221, zero, 77, 87, '#0000ff', 'shadeRgb');
}

// CIE diagram
const CIE = { left: 32, bottom: 532, ux: 888, uy: 607, top: 22, right: 779 };
const INSET = { x: 521, y: 31, w: 250, h: 190, cx: 645, cy: 125, ux: 4870, uy: 3750 };
const LOCUS = [
    [.1741, .005], [.1714, .0051], [.1689, .0069], [.1644, .0109], [.1566, .0177], [.151, .0227], [.144, .0297],
    [.1355, .0399], [.1241, .0578], [.1096, .0868], [.0913, .1327], [.0687, .2007], [.0454, .295], [.0235, .4127],
    [.0082, .5384], [.0039, .6548], [.0139, .7502], [.0389, .812], [.0743, .8338], [.1142, .8262], [.1547, .8059],
    [.1929, .7816], [.2296, .7543], [.3016, .6923], [.3731, .6245], [.4441, .5547], [.5125, .4866], [.5752, .4242],
    [.627, .3725], [.6658, .334], [.6915, .3083], [.7347, .2653]
];

// linear sRGB, scaled so that the strongest channel is full; darker outside the gamut
function xyColor(x, y) {
    const X = x / y, Z = (1 - x - y) / y;
    const rgb = [
        3.2406 * X - 1.5372 - 0.4986 * Z,
        -0.9689 * X + 1.8758 + 0.0415 * Z,
        0.0557 * X - 0.2040 + 1.0570 * Z
    ];
    const max = Math.max(...rgb);
    const level = Math.min(...rgb) >= 0 ? 255 : 153;
    return rgb.map(c => Math.max(c, 0) / max * level);
}

function fillColors(ctx, x0, y0, w, h, toXY) {
    const img = ctx.createImageData(w, h);
    for (let j = 0; j < h; j++) {
        for (let i = 0; i < w; i++) {
            const [x, y] = toXY(x0 + i, y0 + j);
            const c = xyColor(x, Math.max(y, 0.001));
            const p = (j * w + i) * 4;
            img.data[p] = c[0];
            img.data[p + 1] = c[1];
            img.data[p + 2] = c[2];
            img.data[p + 3] = 255;
        }
    }
    const layer = document.createElement('canvas');
    layer.width = w;
    layer.height = h;
    layer.getContext('2d').putImageData(img, 0, 0);
    ctx.drawImage(layer, x0, y0);
}

function drawCieFill() {
    const ctx = document.getElementById('cieFill').getContext('2d');
    const px = LOCUS.map(p => [CIE.left + p[0] * CIE.ux, CIE.bottom - p[1] * CIE.uy]);
    const at = i => px[Math.min(Math.max(i, 0), px.length - 1)];
    ctx.fillStyle = '#232323';
    ctx.fillRect(CIE.left, CIE.top, CIE.right - CIE.left, CIE.bottom - CIE.top);
    ctx.save();
    ctx.beginPath();
    ctx.moveTo(px[0][0], px[0][1]);
    for (let i = 0; i < px.length - 1; i++) {
        const [a, b, c, d] = [at(i - 1), at(i), at(i + 1), at(i + 2)];
        ctx.bezierCurveTo(
            b[0] + (c[0] - a[0]) / 6, b[1] + (c[1] - a[1]) / 6,
            c[0] - (d[0] - b[0]) / 6, c[1] - (d[1] - b[1]) / 6,
            c[0], c[1]
        );
    }
    ctx.closePath();
    ctx.clip();
    fillColors(ctx, CIE.left, CIE.top, 700, 510, (a, b) => [(a - CIE.left) / CIE.ux, (CIE.bottom - b) / CIE.uy]);
    ctx.restore();
    ctx.fillStyle = '#323232';
    ctx.fillRect(INSET.x - 4, INSET.y - 4, INSET.w + 8, INSET.h + 8);
    fillColors(ctx, INSET.x, INSET.y, INSET.w, INSET.h, (a, b) =>
        [0.4193 + (a - INSET.cx) / INSET.ux, 0.5053 - (b - INSET.cy) / INSET.uy]);
}

function drawCie() {
    const svg = document.getElementById('cie');
    const targets = [
        [.3, .6], [.301, .544], [.305, .49], [.307, .44], [.31, .384],
        [.419, .507], [.397, .47], [.378, .437], [.356, .403], [.333, .368],
        [.378, .331], [.444, .331], [.504, .331], [.568, .331], [.64, .331],
        [.313, .294], [.316, .259], [.318, .228], [.319, .193], [.321, .156],
        [.28, .278], [.247, .223], [.215, .172], [.185, .121], [.15, .06],
        [.223, .331], [.242, .331], [.26, .331], [.278, .331], [.295, .331]
    ];
    const readings = [
        [.298, .612, '#00b900'], [.298, .564, '#3cb93c'], [.298, .512, '#58b958'], [.298, .454, '#78b978'], [.298, .393, '#98b998'],
        [.407, .525, '#b9b900'], [.388, .488, '#b9b948'], [.369, .454, '#b9b968'], [.347, .414, '#b9b984'], [.325, .373, '#b9b9a0'],
        [.37, .329, '#b98888'], [.443, .334, '#b96464'], [.506, .335, '#b94a4a'], [.578, .337, '#b93030'], [.631, .34, '#b90000'],
        [.298, .283, '#b9a0b9'], [.3, .243, '#b984b9'], [.3, .211, '#b968b9'], [.3, .179, '#b948b9'], [.3, .146, '#b900b9'],
        [.263, .259, '#9898b9'], [.229, .202, '#7878b9'], [.201, .151, '#5c5cb9'], [.175, .103, '#3c3cb9'], [.15, .06, '#0000b9'],
        [.22, .322, '#00b9b0'], [.232, .324, '#48b9b9'], [.247, .324, '#68b9b9'], [.263, .324, '#84b9b9'], [.281, .326, '#a0b9b9'],
        [.294, .322, '#ffffff']
    ];
    const sx = x => CIE.left + x * CIE.ux;
    const sy = y => CIE.bottom - y * CIE.uy;
    const box = (x, y, color) =>
        add(svg, 'rect', { x: Math.round(x) - 7.5, y: Math.round(y) - 6.5, width: 15, height: 14, fill: 'none', stroke: color, 'stroke-width': 1.5 });
    const dot = (x, y, color) =>
        add(svg, 'circle', { cx: x, cy: y, r: 4.7, fill: color, stroke: '#000', 'stroke-width': 1.2 });

    label(svg, 391, 17, 'CIE 1931 xy');
    add(svg, 'rect', {
        x: CIE.left, y: CIE.top, width: CIE.right - CIE.left, height: CIE.bottom - CIE.top,
        fill: 'none', stroke: '#8a8a8a', 'stroke-width': 2
    });
    for (let i = 0; i <= 8; i++) {
        const text = i ? '0,' + i : '0';
        line(svg, sx(i / 10), CIE.bottom, sx(i / 10), CIE.bottom + 7, '#ccc');
        label(svg, sx(i / 10) - 1, 553, text);
        line(svg, CIE.left - 6, sy(i / 10), CIE.left, sy(i / 10), '#ccc');
        label(svg, CIE.left - 6, sy(i / 10) + 6, text, 'end');
    }
    targets.forEach(t => box(sx(t[0]), sy(t[1]), '#fff'));
    box(sx(.312), sy(.331), '#000');
    readings.forEach(r => dot(sx(r[0]), sy(r[1]), r[2]));

    add(svg, 'rect', { x: INSET.x, y: INSET.y, width: INSET.w, height: INSET.h, fill: 'none', stroke: '#999', 'stroke-width': 2 });
    box(INSET.cx, INSET.cy, '#fff');
    dot(592, 62, '#b9b900');
}

drawDeltaE();
drawDelta('deltaL', 'DeltaL', 2.3);
drawDelta('deltaC', 'DeltaC', 5);
drawDelta('deltaH', 'DeltaH', 6.4);
drawRgb();
drawCieFill();
drawCie();
```
